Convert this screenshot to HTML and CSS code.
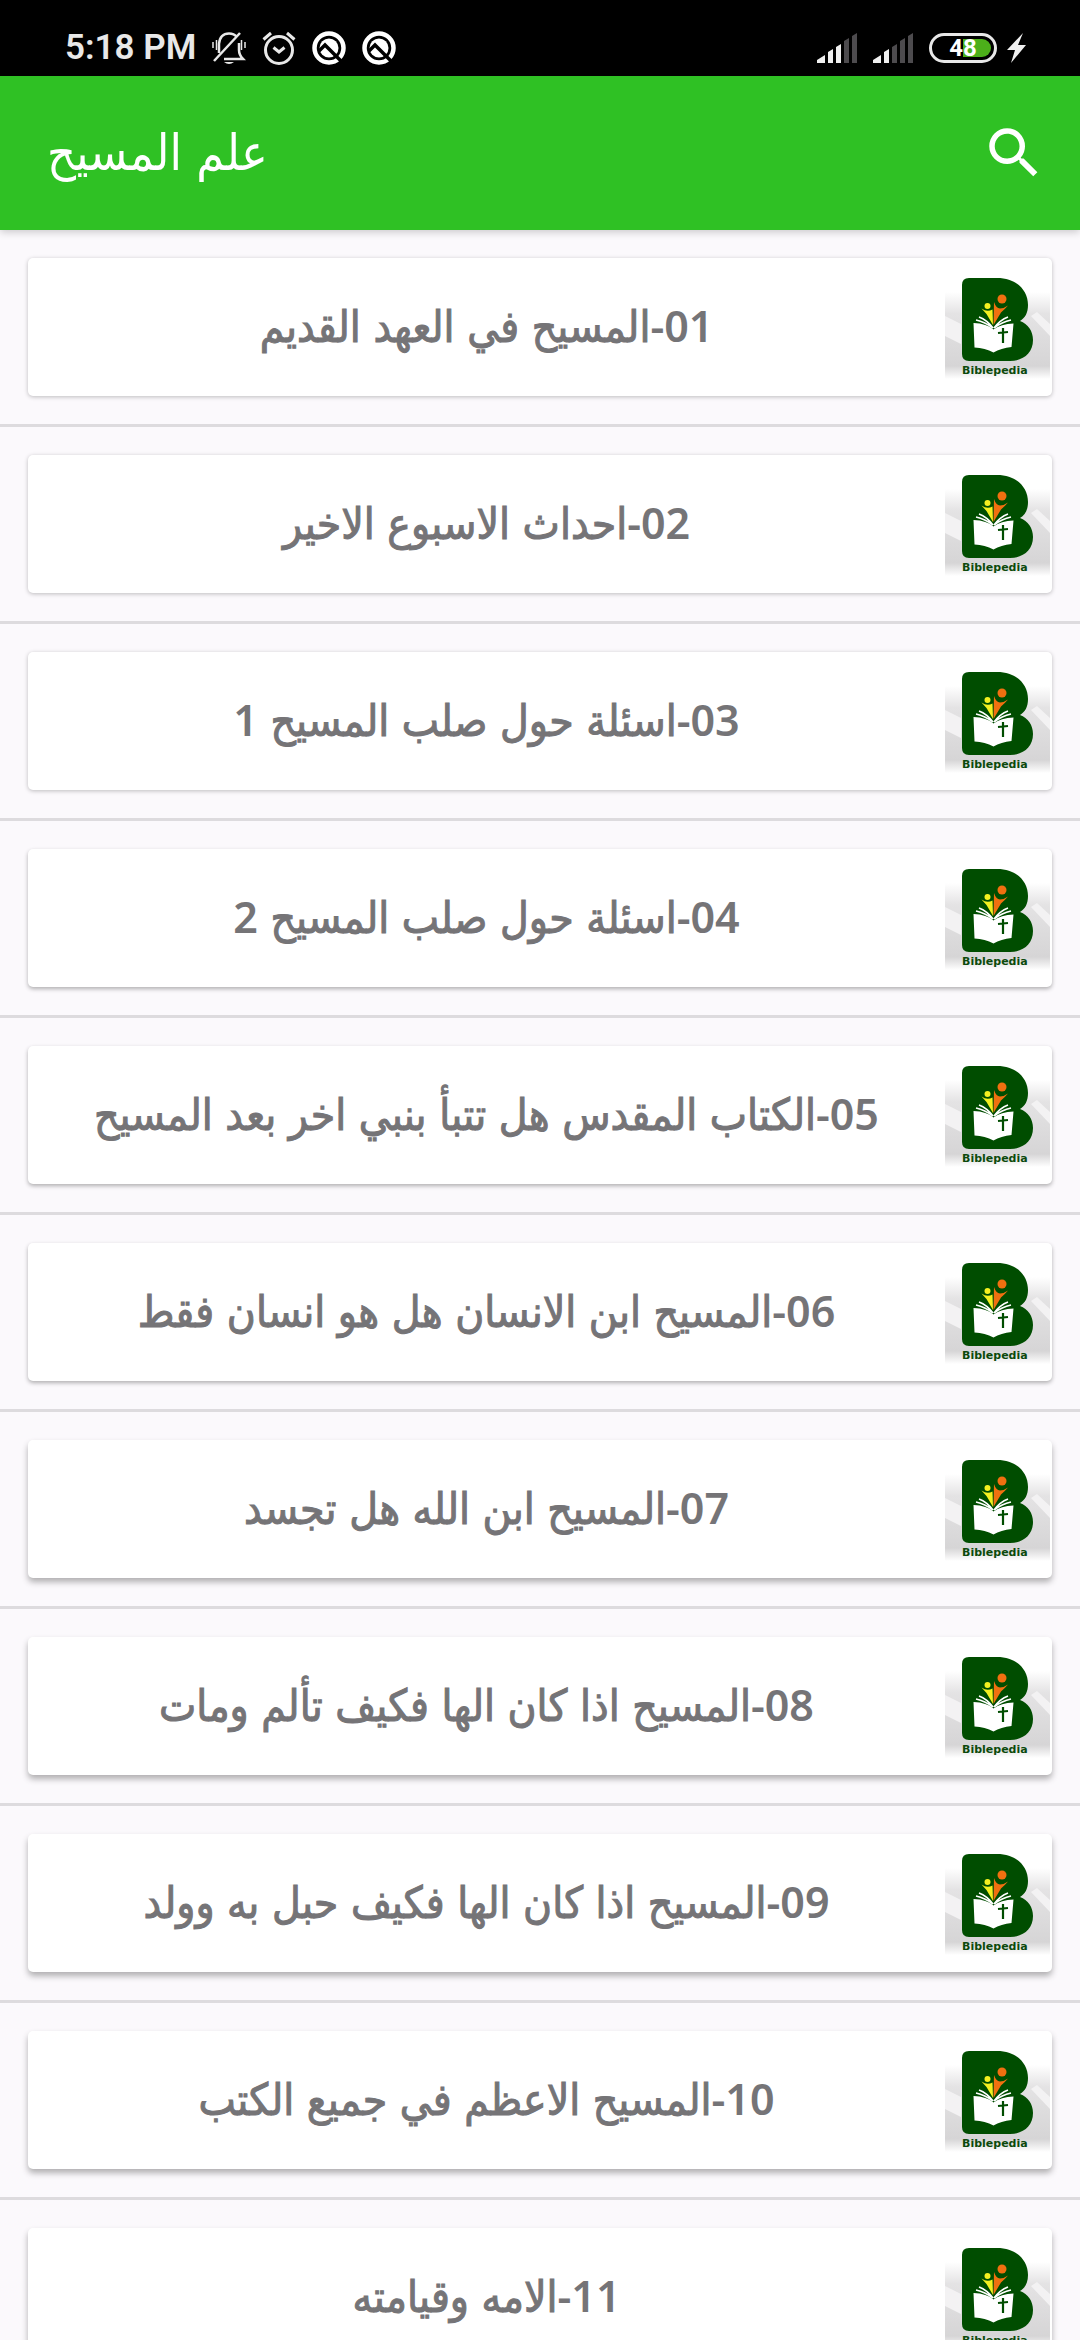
FILE: index.html
```
<!DOCTYPE html>
<html lang="ar">
<head>
    <meta charset="UTF-8">
    <meta name="viewport" content="width=device-width, initial-scale=1.0">
    <title>علم المسيح</title>
    <link rel="stylesheet" href="styles.css">
</head>
<body>

    <!-- Shared logo, reused by every row -->
    <svg class="defs" width="0" height="0" aria-hidden="true">
        <defs>
            <linearGradient id="fade" x1="0" y1="0" x2="0" y2="1">
                <stop offset="0" stop-color="#fff"/>
                <stop offset="0.25" stop-color="#e4e3e4"/>
                <stop offset="0.85" stop-color="#d6d5d6"/>
                <stop offset="1" stop-color="#fff"/>
            </linearGradient>
        </defs>
        <symbol id="logo" viewBox="0 0 105 105">
            <rect y="18" width="105" height="87" fill="url(#fade)"/>
            <path d="M0 42V62L16 70V50zM86 42L105 62V50L92 38z" fill="#f3f2f3"/>
            <path d="M24 4H52C72 4 83 17 83 31C83 39 80 44 75 47C83 50 88 57 88 66C88 79 78 87 65 87H24Q17 87 17 80V11Q17 4 24 4z" fill="#004d00"/>
            <circle cx="57" cy="25" r="4.5" fill="#f07010"/>
            <path d="M49 28Q51 34 55 34.5Q59 34.5 63 31.5Q60 35 56 38.5L48.5 51z" fill="#f07010"/>
            <circle cx="42.5" cy="32" r="3" fill="#f4f020"/>
            <path d="M36.5 34.5Q42 38.5 47.5 35.5L48 51L41.5 40z" fill="#f4f020"/>
            <path d="M48 54Q42 46 34 43M48 54Q40 48 31 46M49 54Q55 46 63 43M49 54Q57 48 66 46" fill="none" stroke="#fff" stroke-width="1.6"/>
            <path d="M28.5 49Q42 49.5 48.5 55.5Q56 50 68.5 49.5L66.5 73Q56 74 48.5 78.5Q40 74 29.5 73.5z" fill="#fff"/>
            <path d="M58 54V69M53 59L63 58" stroke="#004d00" stroke-width="2.2"/>
        </symbol>
        <symbol id="q" viewBox="0 0 34 34">
            <circle cx="17" cy="17" r="14.5" fill="none" stroke="#fff" stroke-width="4.5"/>
            <circle cx="17" cy="17" r="9.5" fill="#fff"/>
            <path d="M7 20L13 14L30 31" fill="none" stroke="#000" stroke-width="3.5"/>
        </symbol>
    </svg>

    <div class="screen">
        <div class="status">
            <span class="time">5:18 PM</span>
            <svg width="34" height="34" viewBox="0 0 34 34" fill="none" stroke="#e8e8e8" stroke-width="2.5">
                <path d="M7 22V13Q8 2.5 17 2.5Q22 2.5 25 6M27 12V19Q27 24 31 28H12"/>
                <path d="M2 30L28 2"/>
                <path d="M1 11V17M4.5 9V19M29.5 9V19M33 11V17" stroke-width="1.5"/>
                <path d="M12 31H22Q17 35 12 31z" fill="#e8e8e8" stroke="none"/>
            </svg>
            <svg width="34" height="34" viewBox="0 0 34 34" fill="none" stroke="#e8e8e8" stroke-width="3">
                <circle cx="17" cy="19" r="13.5"/>
                <path d="M1.5 8.5L9 2M25 2L32.5 8.5M11.5 16.5L17 21L22.5 16.5"/>
            </svg>
            <svg width="34" height="34"><use href="#q"/></svg>
            <svg width="34" height="34"><use href="#q"/></svg>
            <div class="status-right">
                <svg width="40" height="30" viewBox="0 0 40 30" fill="#f0f0f0">
                    <path d="M0 30V27L8 22V30zM11 19L16 16V30H11zM19 14L24 11V30H19z"/>
                    <path d="M27 8L32 5V30H27zM35 3L40 0V30H35z" fill="#4d4b4e"/>
                </svg>
                <svg width="40" height="30" viewBox="0 0 40 30" fill="#f0f0f0">
                    <path d="M0 30V27L8 22V30zM11 19L16 16V30H11z"/>
                    <path d="M19 14L24 11V30H19zM27 8L32 5V30H27zM35 3L40 0V30H35z" fill="#4d4b4e"/>
                </svg>
                <span class="battery">48</span>
                <svg width="19" height="30" viewBox="0 0 19 30"><path d="M16 0L0 17H8L4 30L19 12H11z" fill="#f0f0f0"/></svg>
            </div>
        </div>

        <header class="toolbar">
            <h1>علم المسيح</h1>
            <button class="search" aria-label="بحث">
                <svg width="66" height="66" viewBox="0 0 24 24"><path fill="#fff" d="M15.5 14h-.79l-.28-.27A6.471 6.471 0 0 0 16 9.5 6.5 6.5 0 1 0 9.5 16c1.61 0 3.09-.59 4.23-1.57l.27.28v.79l5 4.99L20.49 19l-4.99-5zm-6 0C7.01 14 5 11.99 5 9.5S7.01 5 9.5 5 14 7.01 14 9.5 11.99 14 9.5 14z"/></svg>
            </button>
        </header>

        <ul class="list">
            <li><a class="card" href="#01"><span class="title"><b>01-</b>المسيح في العهد القديم</span><span class="logo"><svg><use href="#logo"/></svg><span>Biblepedia</span></span></a></li>
            <li><a class="card" href="#02"><span class="title"><b>02-</b>احداث الاسبوع الاخير</span><span class="logo"><svg><use href="#logo"/></svg><span>Biblepedia</span></span></a></li>
            <li><a class="card" href="#03"><span class="title"><b>03-</b>اسئلة حول صلب المسيح <b>1</b></span><span class="logo"><svg><use href="#logo"/></svg><span>Biblepedia</span></span></a></li>
            <li><a class="card" href="#04"><span class="title"><b>04-</b>اسئلة حول صلب المسيح <b>2</b></span><span class="logo"><svg><use href="#logo"/></svg><span>Biblepedia</span></span></a></li>
            <li><a class="card" href="#05"><span class="title"><b>05-</b>الكتاب المقدس هل تتبأ بنبي اخر بعد المسيح</span><span class="logo"><svg><use href="#logo"/></svg><span>Biblepedia</span></span></a></li>
            <li><a class="card" href="#06"><span class="title"><b>06-</b>المسيح ابن الانسان هل هو انسان فقط</span><span class="logo"><svg><use href="#logo"/></svg><span>Biblepedia</span></span></a></li>
            <li><a class="card" href="#07"><span class="title"><b>07-</b>المسيح ابن الله هل تجسد</span><span class="logo"><svg><use href="#logo"/></svg><span>Biblepedia</span></span></a></li>
            <li><a class="card" href="#08"><span class="title"><b>08-</b>المسيح اذا كان الها فكيف تألم ومات</span><span class="logo"><svg><use href="#logo"/></svg><span>Biblepedia</span></span></a></li>
            <li><a class="card" href="#09"><span class="title"><b>09-</b>المسيح اذا كان الها فكيف حبل به وولد</span><span class="logo"><svg><use href="#logo"/></svg><span>Biblepedia</span></span></a></li>
            <li><a class="card" href="#10"><span class="title"><b>10-</b>المسيح الاعظم في جميع الكتب</span><span class="logo"><svg><use href="#logo"/></svg><span>Biblepedia</span></span></a></li>
            <li><a class="card" href="#11"><span class="title"><b>11-</b>الامه وقيامته</span><span class="logo"><svg><use href="#logo"/></svg><span>Biblepedia</span></span></a></li>
        </ul>
    </div>

</body>
</html>
```
FILE: styles.css
```
* {
    box-sizing: border-box;
}
body {
    margin: 0;
    background: #fbf9fc;
    font-family: "DejaVu Sans Condensed", "DejaVu Sans", sans-serif;
}
.defs {
    position: absolute;
}
.screen {
    height: 100vh;
    display: flex;
    flex-direction: column;
    overflow: hidden;
}

/* Status bar */
.status {
    flex: none;
    height: 76px;
    padding: 20px 54px 0 65px;
    display: flex;
    align-items: center;
    gap: 16px;
    background: #000;
    color: #e8e8e8;
    font-family: Roboto, sans-serif;
}
.time {
    font-size: 35px;
    font-weight: 600;
    line-height: 40px;
}
.status-right {
    margin-left: auto;
    display: flex;
    align-items: center;
    gap: 16px;
}
.battery {
    width: 68px;
    height: 30px;
    border: 3px solid #e8e8e8;
    border-radius: 15px;
    background: linear-gradient(90deg, #000 50%, #4caf1a 50%) content-box;
    padding: 3px;
    font-size: 24px;
    font-weight: 700;
    line-height: 18px;
    text-align: center;
    color: #fff;
}
.status-right svg:last-child {
    margin-left: -6px;
}

/* Toolbar */
.toolbar {
    flex: none;
    height: 154px;
    padding: 0 33px 0 47px;
    display: flex;
    align-items: center;
    justify-content: space-between;
    background: #2fc124;
    color: #fff;
    box-shadow: 0 2px 8px rgba(0, 0, 0, 0.2);
}
.toolbar h1 {
    margin: 0;
    font-size: 50px;
    font-weight: normal;
    line-height: 60px;
}
.search {
    width: 66px;
    height: 66px;
    padding: 0;
    border: none;
    background: none;
    cursor: pointer;
}

/* List */
.list {
    flex: 1;
    margin: 0;
    padding: 0;
    list-style: none;
}
.list li {
    padding: 28px;
    border-bottom: 3px solid #dddbde;
}
.card {
    height: 138px;
    padding: 0 2px 2px 0;
    display: flex;
    align-items: center;
    background: #fff;
    border-radius: 5px;
    box-shadow: 0 1px 4px rgba(0, 0, 0, 0.25);
    color: #757477;
    text-decoration: none;
}
.list li:nth-child(n+4) .card {
    box-shadow: 0 2px 4px rgba(0, 0, 0, 0.3);
}
.list li:nth-child(n+7) .card {
    box-shadow: 0 4px 6px rgba(0, 0, 0, 0.3);
}
.title {
    flex: 1;
    direction: rtl;
    text-align: center;
    white-space: nowrap;
    font-size: 44px;
    line-height: 60px;
    -webkit-text-stroke: 1px #757477;
}
.title b {
    font-family: "Noto Sans", sans-serif;
    font-size: 43px;
    font-weight: 600;
    -webkit-text-stroke: 0;
}

/* Logo with its name over the faded bottom edge */
.logo {
    flex: none;
    display: grid;
}
.logo svg,
.logo span {
    grid-area: 1 / 1;
}
.logo svg {
    width: 105px;
    height: 105px;
}
.logo span {
    align-self: end;
    padding-left: 17px;
    font-family: "DejaVu Sans", sans-serif;
    font-size: 11px;
    font-weight: bold;
    line-height: 16px;
    color: #0c4a0c;
}
```
